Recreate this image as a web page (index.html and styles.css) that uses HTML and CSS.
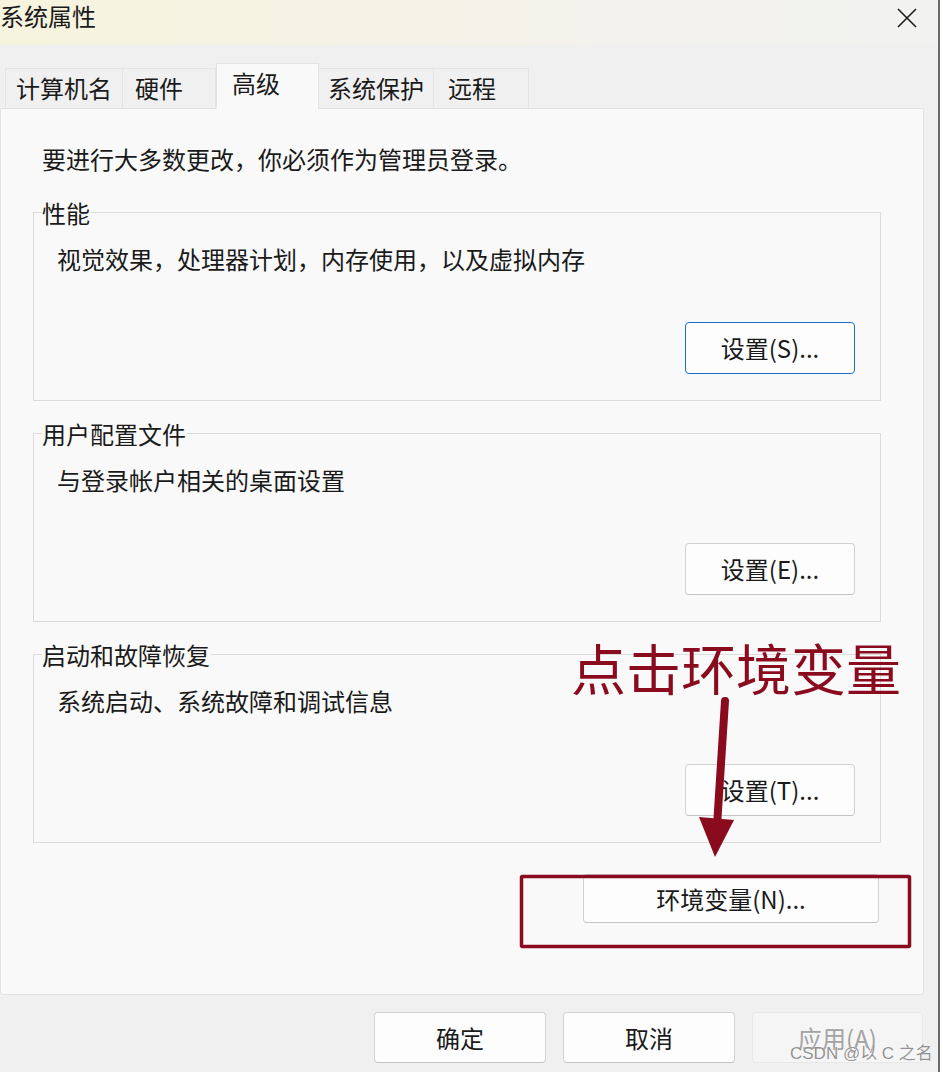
FILE: index.html
```html
<!DOCTYPE html>
<html lang="zh-CN">
<head>
<meta charset="utf-8">
<title>系统属性</title>
<link rel="stylesheet" href="styles.css">
</head>
<body>
<div class="window">
  <div class="titlebar">
    <div class="title">系统属性</div>
    <svg class="close" width="20" height="20" viewBox="0 0 20 20"><path d="M1 1 L19 19 M19 1 L1 19" stroke="#1b1b1b" stroke-width="1.6" fill="none"/></svg>
  </div>
  <div class="tabs">
    <div class="tab tab-name">计算机名</div>
    <div class="tab tab-hw">硬件</div>
    <div class="tab tab-adv active">高级</div>
    <div class="tab tab-prot">系统保护</div>
    <div class="tab tab-remote">远程</div>
  </div>
  <div class="panel">
    <p class="intro">要进行大多数更改，你必须作为管理员登录。</p>
    <fieldset class="group">
      <legend>性能</legend>
      <div class="group-body">
        <p class="desc">视觉效果，处理器计划，内存使用，以及虚拟内存</p>
        <div class="actions"><button class="btn btn-set focused">设置(S)...</button></div>
      </div>
    </fieldset>
    <fieldset class="group">
      <legend>用户配置文件</legend>
      <div class="group-body">
        <p class="desc">与登录帐户相关的桌面设置</p>
        <div class="actions"><button class="btn btn-set">设置(E)...</button></div>
      </div>
    </fieldset>
    <fieldset class="group">
      <legend>启动和故障恢复</legend>
      <div class="group-body">
        <p class="desc">系统启动、系统故障和调试信息</p>
        <div class="actions"><button class="btn btn-set">设置(T)...</button></div>
      </div>
    </fieldset>
    <button class="btn btn-env">环境变量(N)...</button>
  </div>
  <div class="footer">
    <button class="btn btn-foot">确定</button>
    <button class="btn btn-foot">取消</button>
    <button class="btn btn-foot disabled">应用(A)</button>
  </div>
</div>

<div class="note">点击环境变量</div>
<svg class="annot" width="943" height="1072" viewBox="0 0 943 1072">
  <line x1="725" y1="701" x2="717" y2="826" stroke="#8a0a1e" stroke-width="8" stroke-linecap="round"/>
  <polygon points="699,817 734,820 715,857" fill="#8a0a1e"/>
  <rect x="521.5" y="876.5" width="388" height="70" fill="none" stroke="#8a0a1e" stroke-width="3.5" rx="1"/>
</svg>
<div class="watermark">CSDN @以 C 之名</div>
</body>
</html>
```
FILE: styles.css
```css
* { box-sizing: border-box; }
html, body {
  margin: 0;
  padding: 0;
}
body {
  width: 943px;
  height: 1072px;
  overflow: hidden;
  background: #ffffff;
  font-family: "Noto Sans CJK SC", "Noto Sans", sans-serif;
  color: #1a1a1a;
  position: relative;
}
.window {
  width: 940px;
  height: 1072px;
  background: #f0f0f0;
  border-right: 2px solid #6a6a6a;
  display: flex;
  flex-direction: column;
}
.titlebar {
  height: 45px;
  display: flex;
  justify-content: space-between;
  align-items: flex-start;
  background: linear-gradient(90deg, #f6f3de 0%, #f5f3e4 35%, #f3f2ec 65%, #f2f2f1 100%);
  padding-right: 21px;
}
.title {
  font-size: 24px;
  line-height: 30px;
  margin-top: 1px;
}
.close {
  margin-top: 8px;
  display: block;
}
.tabs {
  height: 64px;
  margin-bottom: -1px;
  display: flex;
  align-items: flex-end;
  padding-left: 5px;
  position: relative;
  z-index: 1;
}
.tab {
  height: 41px;
  font-size: 24px;
  line-height: 30px;
  padding-top: 4px;
  background: #f0f0f0;
  border: 1px solid #e4e4e4;
  border-bottom: 1px solid #e0e0e0;
  white-space: nowrap;
}
.tab + .tab { border-left: none; }
.tab-name { width: 118px; padding-left: 10px; }
.tab-hw { width: 93px; padding-left: 12px; }
.tab-adv { width: 103px; padding-left: 15px; }
.tab-prot { width: 115px; padding-left: 9px; }
.tab-remote { width: 95px; padding-left: 14px; }
.tab.active {
  height: 46px;
  background: #f9f9f9;
  border: 1px solid #e4e4e4;
  border-bottom: 1px solid #f9f9f9;
}
.tab.active + .tab { border-left: none; }
.panel {
  width: 924px;
  height: 887px;
  background: #f9f9f9;
  border: 1px solid #e2e2e2;
  border-radius: 0 0 3px 3px;
  padding: 35px 42px 0 32px;
  display: flex;
  flex-direction: column;
}
.intro {
  margin: 0 0 0 9px;
  font-size: 24px;
  line-height: 30px;
}
.group {
  margin: 20px 0 0 0;
  padding: 0;
  border: 1px solid #dcdcdc;
  min-width: 0;
}
.group + .group { margin-top: 14px; }
.group legend {
  margin-left: 8px;
  padding: 4px 1px 2px 0;
  font-size: 24px;
  line-height: 30px;
}
.group-body {
  padding: 14px 25px 26px 23px;
}
.desc {
  margin: 0;
  font-size: 24px;
  line-height: 30px;
}
.actions {
  margin-top: 48px;
  display: flex;
  justify-content: flex-end;
}
.btn {
  font-family: "Noto Sans CJK SC", "Noto Sans", sans-serif;
  font-size: 24px;
  line-height: 30px;
  color: #1a1a1a;
  background: #fdfdfd;
  border: 1px solid #d2d2d2;
  border-bottom-color: #c4c4c4;
  border-radius: 4px;
  padding: 0;
  margin: 0;
}
.btn-set {
  width: 170px;
  height: 52px;
}
.btn.focused {
  border: 1px solid #1a6fc4;
}
.btn-env {
  margin-top: 31px;
  align-self: flex-end;
  margin-right: 2px;
  width: 296px;
  height: 49px;
}
.footer {
  margin-top: 17px;
  display: flex;
  justify-content: flex-end;
  gap: 17px;
  padding-right: 15px;
}
.btn-foot {
  width: 172px;
  height: 51px;
}
.btn-foot.disabled {
  width: 171px;
  color: #a3a3a3;
  background: #f5f5f5;
  border: 1px solid #e8e8e8;
}
.note {
  position: absolute;
  left: 571px;
  top: 639px;
  font-size: 55px;
  line-height: 55px;
  font-weight: 400;
  color: #8a0a1e;
  white-space: nowrap;
}
.annot {
  position: absolute;
  left: 0;
  top: 0;
  pointer-events: none;
}
.watermark {
  position: absolute;
  left: 790px;
  top: 1043px;
  font-family: "Liberation Sans", "Noto Sans CJK SC", sans-serif;
  font-size: 17px;
  line-height: 22px;
  color: rgba(125, 125, 125, 0.85);
  white-space: nowrap;
  text-shadow: 0 0 1px #ffffff;
}
```
